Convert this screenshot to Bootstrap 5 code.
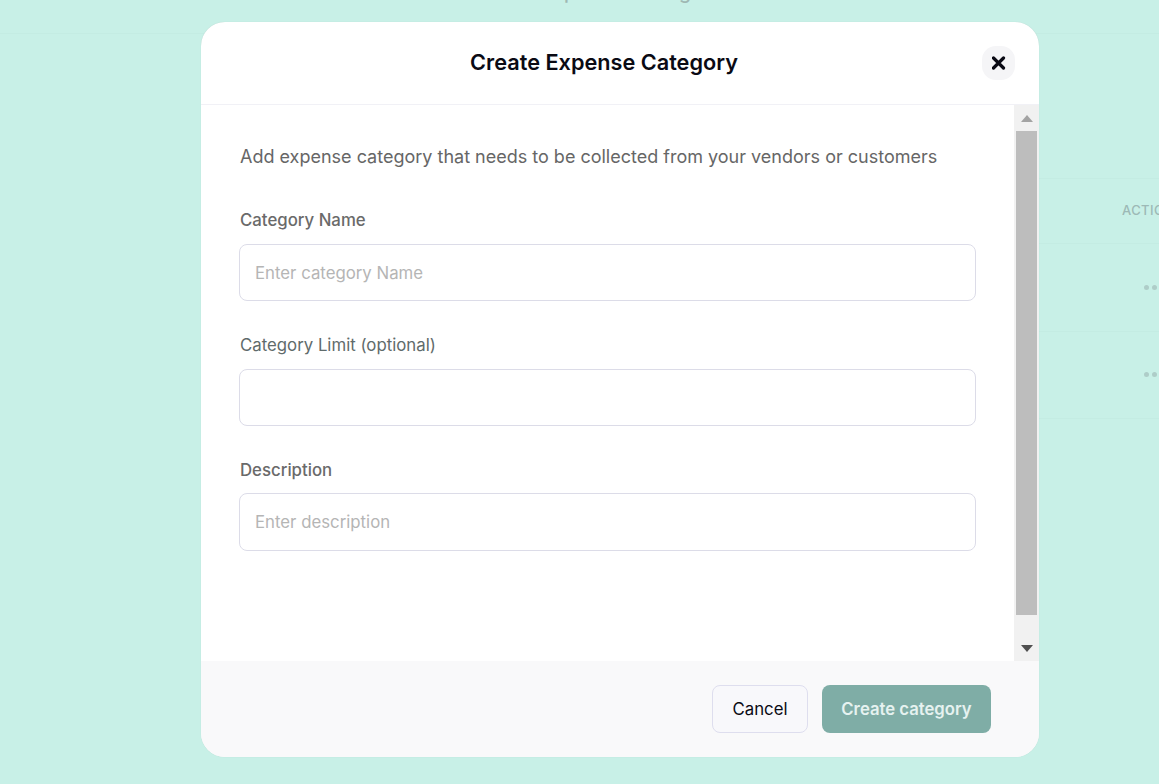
<!DOCTYPE html>
<html lang="en">
<head>
  <meta charset="UTF-8">
  <meta name="viewport" content="width=device-width, initial-scale=1">
  <title>Create Expense Category</title>
  <link href="https://cdn.jsdelivr.net/npm/bootstrap@5.3.0/dist/css/bootstrap.min.css" rel="stylesheet">
  <style>
    html, body {
      height: 100%;
      overflow: hidden;
    }
    body {
      background-color: #c8f0e7;
      font-family: "Inter", "Liberation Sans", sans-serif;
      color: #666;
    }
    /* page behind the modal */
    .page-top {
      height: 34px;
      border-bottom: 1px solid #c4ece3;
      overflow: hidden;
      text-align: center;
    }
    .page-title {
      margin: -22px 0 0 0;
      padding-left: 84px;
      font-size: 19.4px;
      line-height: 28px;
      font-weight: 500;
      color: #9fb8b3;
    }
    .page-table {
      margin-top: 144px;
      margin-left: 300px;
    }
    .page-row {
      display: flex;
      justify-content: flex-end;
      align-items: center;
      border-bottom: 1px solid #c4ece3;
      height: 88px;
    }
    .page-row:last-child {
      height: 87px;
      padding-bottom: 2px;
    }
    .page-head {
      height: 66px;
      border-top: 1px solid #c4ece3;
      font-size: 13px;
      font-weight: 500;
      color: #9db9b6;
      letter-spacing: .4px;
      white-space: nowrap;
      overflow: hidden;
    }
    .head-cell {
      width: 37px;
      overflow: hidden;
    }
    .row-dots {
      width: 15px;
      display: flex;
      gap: 3px;
      overflow: hidden;
    }
    .row-dots span {
      flex: none;
      width: 5px;
      height: 5px;
      border-radius: 50%;
      background-color: #aecdc8;
    }
    /* modal */
    .expense-modal {
      position: absolute;
      left: 201px;
      top: 22px;
      width: 838px;
      height: 735px;
      border: 0;
      border-radius: 24px;
      overflow: hidden;
      background-color: #fff;
      box-shadow: 0 0 1px rgba(0, 0, 0, .15);
    }
    .expense-modal .modal-header {
      height: 83px;
      flex: none;
      padding: 0 24px 0 0;
      border-bottom: 1px solid #f1f1f6;
      position: relative;
    }
    .expense-title {
      width: 100%;
      margin: 0 0 2px 0;
      padding-right: 8px;
      font-size: 21.7px;
      font-weight: 600;
      color: #0a0a14;
      text-align: center;
    }
    .close-round {
      position: absolute;
      right: 24px;
      top: 24px;
      width: 33px;
      height: 34px;
      padding: 0;
      border: 0;
      border-radius: 14px;
      background-color: #f5f5f7;
    }
    .body-wrap {
      flex: 1;
      min-height: 0;
    }
    .expense-modal .modal-body {
      padding: 40px 38px 0 38px;
    }
    .intro-text {
      font-size: 18px;
      line-height: 24px;
      margin-bottom: 40px;
      padding-left: 1px;
      color: #666;
    }
    .field-label {
      display: block;
      padding-left: 1px;
      font-size: 16.8px;
      font-weight: 500;
      line-height: 22px;
      margin-bottom: 13px;
      color: #6a6a6a;
    }
    .field-label-plain {
      font-weight: 400;
      color: #5f6b6b;
    }
    .field-label-last {
      padding-top: 1px;
      margin-bottom: 12px;
    }
    .field-box {
      height: 57.4px;
      margin-bottom: 32.2px;
      padding: 0 15px;
      font-size: 16.8px;
      border: 1px solid #dcdce8;
      border-radius: 8px;
    }
    .field-box::placeholder {
      color: #b5b5b5;
    }
    .fake-scroll {
      flex: none;
      width: 25px;
      background-color: #f1f1f1;
      display: flex;
      flex-direction: column;
      align-items: center;
    }
    .scroll-arrow {
      flex: none;
      height: 26px;
      display: flex;
      align-items: center;
      justify-content: center;
    }
    .scroll-thumb {
      flex: none;
      height: 484px;
      width: 21px;
      background-color: #bdbdbd;
    }
    .scroll-rest {
      flex: 1;
    }
    .expense-modal .modal-footer {
      flex: none;
      height: 96px;
      padding: 0 48px 0 0;
      border-top: 0;
      background-color: #f9f9fa;
      border-radius: 0;
      gap: 14px;
    }
    .expense-modal .modal-footer > * {
      margin: 0;
    }
    .btn-cancel-soft {
      width: 96px;
      height: 48px;
      padding-top: 7px;
      padding-bottom: 5px;
      font-size: 16.8px;
      font-weight: 400;
      color: #0a0a14;
      background-color: #f8f8fb;
      border: 1px solid #dedeee;
      border-radius: 8px;
    }
    .btn-create-soft {
      width: 169px;
      height: 48px;
      padding-top: 7px;
      padding-bottom: 5px;
      font-size: 16.7px;
      font-weight: 600;
      color: #e6f2f0;
      background-color: #7fada6;
      border: 0;
      border-radius: 8px;
    }
  </style>
</head>
<body>

<!-- Page behind the modal -->
<div class="page-top">
  <p class="page-title">Expense Settings</p>
</div>
<div class="page-table">
  <div class="page-row page-head"><div class="head-cell">ACTIONS</div></div>
  <div class="page-row"><div class="row-dots"><span></span><span></span><span></span></div></div>
  <div class="page-row"><div class="row-dots"><span></span><span></span><span></span></div></div>
</div>

<!-- Modal -->
<div class="modal-content expense-modal">
  <div class="modal-header">
    <h5 class="expense-title">Create Expense Category</h5>
    <button type="button" class="close-round d-flex align-items-center justify-content-center" aria-label="Close">
      <svg width="14" height="14" viewBox="0.5 0 14 14"><path d="M2 2 12 12M12 2 2 12" stroke="#0a0a14" stroke-width="3.2" stroke-linecap="round"/></svg>
    </button>
  </div>
  <div class="d-flex body-wrap">
    <div class="modal-body">
      <p class="intro-text">Add expense category that needs to be collected from your vendors or customers</p>
      <form>
        <label class="field-label" for="catName">Category Name</label>
        <input type="text" id="catName" class="form-control field-box" placeholder="Enter category Name">
        <label class="field-label field-label-plain" for="catLimit">Category Limit (optional)</label>
        <input type="text" id="catLimit" class="form-control field-box">
        <label class="field-label field-label-last" for="catDesc">Description</label>
        <input type="text" id="catDesc" class="form-control field-box" placeholder="Enter description">
      </form>
    </div>
    <div class="fake-scroll">
      <div class="scroll-arrow"><svg width="12" height="7" viewBox="0 0 12 7"><path d="M6 0 12 7H0Z" fill="#a3a3a3"/></svg></div>
      <div class="scroll-thumb"></div>
      <div class="scroll-rest"></div>
      <div class="scroll-arrow"><svg width="12" height="7" viewBox="0 0 12 7"><path d="M0 0H12L6 7Z" fill="#505050"/></svg></div>
    </div>
  </div>
  <div class="modal-footer">
    <button type="button" class="btn btn-cancel-soft">Cancel</button>
    <button type="button" class="btn btn-create-soft">Create category</button>
  </div>
</div>

<script src="https://cdn.jsdelivr.net/npm/bootstrap@5.3.0/dist/js/bootstrap.bundle.min.js"></script>
</body>
</html>
